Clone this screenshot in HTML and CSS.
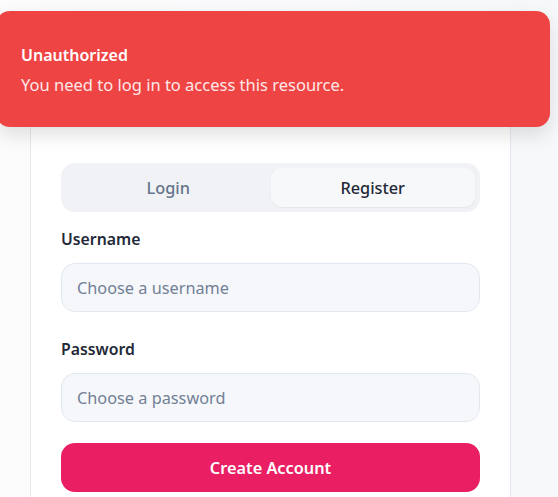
FILE: index.html
```html
<!DOCTYPE html>
<html>
<head>
<meta charset="utf-8">
<link rel="stylesheet" href="styles.css">
</head>
<body>
<div class="page">
  <div class="card">
    <div class="tabs">
      <button class="tab">Login</button>
      <button class="tab active">Register</button>
    </div>
    <label class="label">Username</label>
    <div class="input">Choose a username</div>
    <label class="label label-2">Password</label>
    <div class="input">Choose a password</div>
    <button class="submit">Create Account</button>
  </div>
</div>
<div class="toast">
  <div class="toast-title">Unauthorized</div>
  <div class="toast-text">You need to log in to access this resource.</div>
</div>
</body>
</html>
```
FILE: styles.css
```css
html, body {
  margin: 0;
  padding: 0;
  height: 100%;
  overflow: hidden;
}
body {
  font-family: "Noto Sans", "Open Sans", sans-serif;
  background: linear-gradient(90deg, #fcfcfd 0%, #f7f8fa 100%);
  position: relative;
}
.page {
  padding-left: 30px;
  padding-top: 20px;
}
.card {
  width: 419px;
  background: #ffffff;
  border: 1px solid #e4e8ee;
  border-radius: 16px;
  padding: 142px 30px 40px 30px;
}
.tabs {
  display: flex;
  background: #f0f2f5;
  border-radius: 14px;
  padding: 5px;
  height: 39px;
}
.tab {
  flex: 1;
  border: none;
  background: transparent;
  font-family: inherit;
  font-size: 16.3px;
  font-weight: 500;
  color: #64748b;
  border-radius: 11px;
  padding: 0;
}
.tab.active {
  background: #f7f8fa;
  color: #1f2937;
  box-shadow: 0 1px 2px rgba(0,0,0,0.06);
}
.label {
  display: block;
  margin-top: 16px;
  font-size: 15.8px;
  font-weight: 600;
  color: #1f2937;
  line-height: 22px;
}
.label-2 {
  margin-top: 26px;
}
.input {
  margin-top: 13px;
  height: 47px;
  border: 1px solid #e2e8f0;
  border-radius: 14px;
  background: #f6f7fa;
  display: flex;
  align-items: center;
  padding-left: 15px;
  font-size: 16.3px;
  color: #718096;
}
.submit {
  display: block;
  width: 100%;
  margin-top: 21px;
  height: 49px;
  border: none;
  border-radius: 14px;
  background: #e91e63;
  color: #ffffff;
  font-family: inherit;
  font-size: 16.3px;
  font-weight: 600;
}
.toast {
  position: absolute;
  left: -4px;
  top: 11px;
  width: 554px;
  height: 116px;
  box-sizing: border-box;
  background: #ef4444;
  border-radius: 14px;
  padding: 33px 25px;
  color: #ffffff;
  box-shadow: 0 8px 20px rgba(0,0,0,0.12);
}
.toast-title {
  font-size: 16px;
  font-weight: 600;
  line-height: 22px;
}
.toast-text {
  margin-top: 8px;
  font-size: 16.5px;
  line-height: 22px;
  color: #fde8e8;
}
```
